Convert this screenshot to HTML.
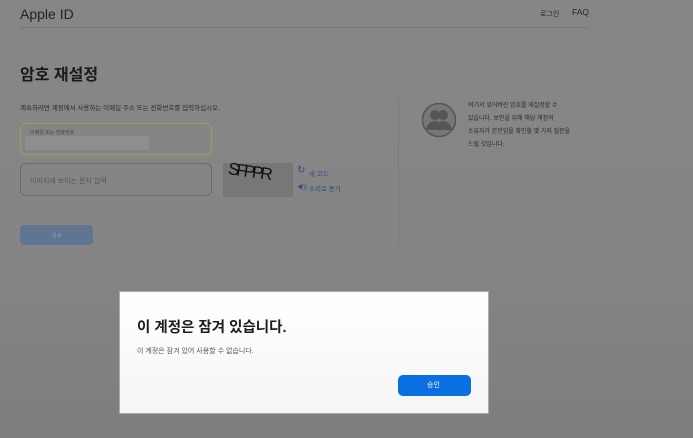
<!DOCTYPE html>
<html><head><meta charset="utf-8"><style>
*{margin:0;padding:0;box-sizing:border-box}
body{width:693px;height:438px;overflow:hidden;background:linear-gradient(#868686 0%,#858585 60%,#7d7d7d 100%);font-family:"Liberation Sans","Noto Sans CJK KR",sans-serif;position:relative;color:#2a2a2a}
.a{position:absolute}
.t{font-size:6.5px;color:#2a2a2a;white-space:nowrap}
</style></head><body>
<div class="a" style="left:20px;top:6px;font-size:14px;color:#222">Apple ID</div>
<div class="a t" style="left:540px;top:9px;font-size:7px">로그인</div>
<div class="a" style="left:572px;top:7px;font-size:8.5px;color:#222">FAQ</div>
<div class="a" style="left:20px;top:27px;width:568px;height:1px;background:#7a7a7a"></div>
<div class="a" style="left:20px;top:61px;font-size:16px;font-weight:bold;color:#1a1a1a">암호 재설정</div>
<div class="a t" style="left:20px;top:102px;font-size:6.5px">계속하려면 계정에서 사용하는 이메일 주소 또는 전화번호를 입력하십시오.</div>
<div class="a" style="left:20px;top:123px;width:192px;height:32px;border:1px solid #a39a55;border-radius:6px;background:#858585"></div>
<div class="a t" style="left:30px;top:129px;font-size:5px;color:#444">이메일 또는 전화번호</div>
<div class="a" style="left:25px;top:136px;width:124px;height:14px;background:#8e8e8e"></div>
<div class="a" style="left:20px;top:163px;width:192px;height:33px;border:1px solid #6a6a6a;border-radius:6px"></div>
<div class="a t" style="left:30px;top:176px;font-size:7px;color:#555">이미지에 보이는 문자 입력</div>
<div class="a" style="left:223px;top:163px;width:70px;height:34px;background:#777"></div>
<div class="a" style="left:228px;top:162px;font-size:17px;color:#111;font-family:'Liberation Sans',sans-serif;letter-spacing:-3px;transform:rotate(8deg)">SFPPR</div>
<div class="a" style="left:297px;top:165px;font-size:10px;color:#2c4a7a">↻</div>
<div class="a t" style="left:309px;top:168px;color:#2c4a7a">새 코드</div>
<div class="a" style="left:297px;top:182px;font-size:6px;color:#2c4a7a">◀))</div>
<div class="a t" style="left:309px;top:183px;color:#2c4a7a">소리로 듣기</div>
<div class="a" style="left:20px;top:225px;width:73px;height:20px;border-radius:4px;background:#5f7592"></div>
<div class="a t" style="left:51px;top:231px;color:#8a9ab0;font-size:6px">계속</div>
<div class="a" style="left:398px;top:99px;width:1px;height:146px;background:#7a7a7a"></div>
<svg class="a" style="left:421px;top:102px" width="36" height="36" viewBox="0 0 36 36"><circle cx="18" cy="18" r="16.5" fill="#777" stroke="#555" stroke-width="1.5"/><circle cx="14" cy="13" r="5" fill="#555"/><circle cx="22" cy="13" r="5" fill="#555"/><path d="M5 28 Q7 19 14 19 Q21 19 22 28Z M14 28 Q16 19 22 19 Q29 19 31 28Z" fill="#555"/></svg>
<div class="a t" style="left:468px;top:100px;line-height:13px;font-size:6px">여기서 잊어버린 암호를 재설정할 수<br>있습니다. 보안을 위해 해당 계정의<br>소유자가 본인임을 확인할 몇 가지 질문을<br>드릴 것입니다.</div>
<div class="a" style="left:119px;top:291px;width:370px;height:123px;background:linear-gradient(#fff,#f6f6f7);border:1px solid #aaa"></div>
<div class="a" style="left:137px;top:316px;font-size:14.5px;font-weight:bold;color:#1d1d1f;white-space:nowrap">이 계정은 잠겨 있습니다.</div>
<div class="a t" style="left:137px;top:346px;font-size:7px;color:#555">이 계정은 잠겨 있어 사용할 수 없습니다.</div>
<div class="a" style="left:398px;top:375px;width:73px;height:21px;border-radius:5px;background:#0a6fe0"></div>
<div class="a t" style="left:427px;top:380px;color:#fff;font-size:7px">승인</div>
</body></html>
